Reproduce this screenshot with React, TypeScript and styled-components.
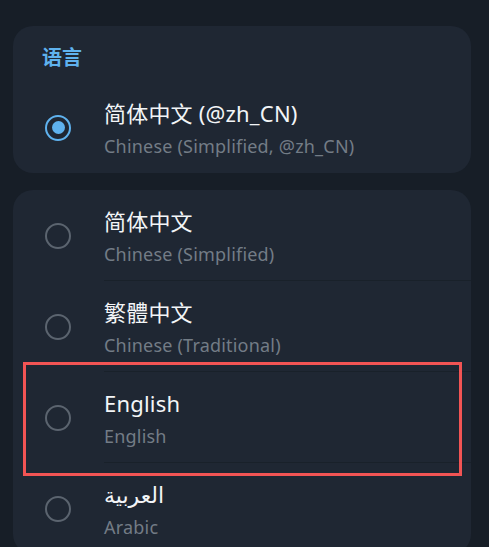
import React from "react";
import styled, { createGlobalStyle } from "styled-components";

const Global = createGlobalStyle`
  html, body { margin: 0; padding: 0; background: #171e27; }
  body { font-family: "Noto Sans", "Noto Sans CJK SC", "DejaVu Sans", sans-serif; }
  * { box-sizing: border-box; }
`;

const Page = styled.div`
  width: 489px;
  height: 547px;
  overflow: hidden;
  background: #171e27;
  padding: 26px 18px 0 13px;
  display: flex;
  flex-direction: column;
  gap: 17px;
`;

const Card = styled.section`
  background: #1f2733;
  border-radius: 20px;
  flex-shrink: 0;
`;

const Header = styled.div`
  height: 56px;
  padding: 17px 0 0 29px;
  color: #5fb2ee;
  font-weight: 700;
  font-size: 20px;
  line-height: 30px;
`;

const Row = styled.div<{ $divider?: boolean }>`
  position: relative;
  height: 91px;
  display: flex;
  align-items: center;
  ${(p) =>
    p.$divider
      ? `&::after { content: ""; position: absolute; left: 91px; right: 0; bottom: 0; height: 1px; background: #19212a; }`
      : ""}
`;

const RadioCell = styled.div`
  width: 91px;
  padding-left: 32px;
  display: flex;
  align-items: center;
`;

const Radio = styled.div<{ $checked?: boolean }>`
  width: 26px;
  height: 26px;
  border-radius: 50%;
  border: 2.5px solid ${(p) => (p.$checked ? "#5fb2ee" : "#5b646f")};
  display: flex;
  align-items: center;
  justify-content: center;
  &::before {
    content: "";
    width: 13px;
    height: 13px;
    border-radius: 50%;
    background: ${(p) => (p.$checked ? "#5fb2ee" : "transparent")};
  }
`;

const Texts = styled.div`
  display: flex;
  flex-direction: column;
  padding-top: 4px;
`;

const Title = styled.div`
  color: #f3f5f7;
  font-size: 22px;
  line-height: 33px;
  letter-spacing: 0.2px;
`;

const Sub = styled.div`
  color: #737c86;
  font-size: 18px;
  line-height: 33px;
  letter-spacing: 0.2px;
`;

const Highlight = styled.div`
  position: absolute;
  z-index: 1;
  left: 10px;
  right: 9px;
  top: -10px;
  bottom: -13px;
  border: 3px solid #f25454;
  pointer-events: none;
`;

type Lang = { title: string; sub: string; checked?: boolean; highlight?: boolean };

const langs: Lang[] = [
  { title: "简体中文", sub: "Chinese (Simplified)" },
  { title: "繁體中文", sub: "Chinese (Traditional)" },
  { title: "English", sub: "English", highlight: true },
  { title: "العربية", sub: "Arabic" },
];

function LangRow({ l, divider }: { l: Lang; divider?: boolean }) {
  return (
    <Row $divider={divider}>
      <RadioCell>
        <Radio $checked={l.checked} />
      </RadioCell>
      <Texts>
        <Title>{l.title}</Title>
        <Sub>{l.sub}</Sub>
      </Texts>
      {l.highlight && <Highlight />}
    </Row>
  );
}

export default function App() {
  return (
    <>
      <Global />
      <Page>
        <Card>
          <Header>语言</Header>
          <LangRow l={{ title: "简体中文 (@zh_CN)", sub: "Chinese (Simplified, @zh_CN)", checked: true }} />
        </Card>
        <Card>
          {langs.map((l, i) => (
            <LangRow key={l.title} l={l} divider={i < langs.length - 1} />
          ))}
        </Card>
      </Page>
    </>
  );
}
